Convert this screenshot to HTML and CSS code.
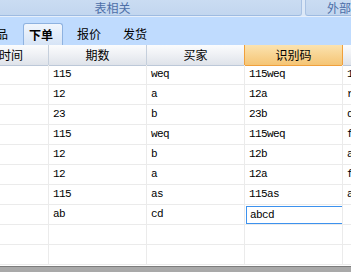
FILE: index.html
```html
<!DOCTYPE html>
<html lang="zh-CN">
<head>
    <meta charset="UTF-8">
    <title>订单表</title>
    <link rel="stylesheet" href="styles.css">
</head>
<body>

    <div class="groups">
        <div class="group group-main">表相关</div>
        <div class="group group-ext">外部</div>
    </div>

    <div class="tabstrip">
        <span class="tab tab-first">商品</span>
        <span class="tab tab-active">下单</span>
        <span class="tab tab-quote">报价</span>
        <span class="tab tab-ship">发货</span>
    </div>

    <div class="grid">
        <div class="hcell">下单时间</div>
        <div class="hcell">期数</div>
        <div class="hcell before-sel">买家</div>
        <div class="hcell sel">识别码</div>
        <div class="hcell"></div>

        <div class="cell"></div><div class="cell">115</div><div class="cell">weq</div><div class="cell">115weq</div><div class="cell">1</div>
        <div class="cell"></div><div class="cell">12</div><div class="cell">a</div><div class="cell">12a</div><div class="cell">r</div>
        <div class="cell"></div><div class="cell">23</div><div class="cell">b</div><div class="cell">23b</div><div class="cell">q</div>
        <div class="cell"></div><div class="cell">115</div><div class="cell">weq</div><div class="cell">115weq</div><div class="cell">f</div>
        <div class="cell"></div><div class="cell">12</div><div class="cell">b</div><div class="cell">12b</div><div class="cell">a</div>
        <div class="cell"></div><div class="cell">12</div><div class="cell">a</div><div class="cell">12a</div><div class="cell">f</div>
        <div class="cell"></div><div class="cell">115</div><div class="cell">as</div><div class="cell">115as</div><div class="cell">a</div>
        <div class="cell"></div><div class="cell">ab</div><div class="cell">cd</div><div class="cell"><input class="edit" type="text" value="abcd"></div><div class="cell"></div>
        <div class="cell"></div><div class="cell"></div><div class="cell"></div><div class="cell"></div><div class="cell"></div>
        <div class="cell"></div><div class="cell"></div><div class="cell"></div><div class="cell"></div><div class="cell"></div>
    </div>

    <div class="statusbar"></div>

</body>
</html>
```

FILE: styles.css
```css
body {
    margin: 0;
    width: 351px;
    height: 272px;
    overflow: hidden;
    background: #ffffff;
    font-family: "Noto Sans CJK SC", "DejaVu Sans", sans-serif;
    font-size: 12px;
    color: #000;
}

/* ribbon group captions */
.groups {
    display: flex;
    height: 16px;
    background: #dce8f7;
}

.group {
    height: 15px;
    line-height: 15px;
    border-bottom: 1px solid #9ebbe1;
    background: linear-gradient(to bottom, #cadcf2, #c2d6ef);
    color: #4d6fa8;
    font-size: 12px;
    white-space: nowrap;
}

.group-main {
    width: 387px;
    margin-left: -76px;
    text-align: center;
    border-right: 1px solid #a9c2e3;
    border-radius: 0 0 3px 0;
}

.group-ext {
    flex: 1;
    margin-left: 3px;
    padding-left: 21px;
    border-left: 1px solid #a9c2e3;
    border-radius: 0 0 0 3px;
}

/* tabs */
.tabstrip {
    display: flex;
    align-items: flex-end;
    height: 28px;
    border-top: 1px solid #e6effb;
    background: #bfdbfe;
    white-space: nowrap;
}

.tab {
    height: 22px;
    line-height: 22px;
}

.tab-first {
    margin-left: -16px;
}

.tab-active {
    margin-left: 15px;
    height: 21px;
    padding: 0 9px 0 5px;
    border: 1px solid #8eb2e0;
    border-bottom: none;
    border-radius: 3px 3px 0 0;
    background: linear-gradient(to bottom, #f1f6fd, #d6e4f6);
    font-weight: bold;
}

.tab-quote {
    margin-left: 14px;
}

.tab-ship {
    margin-left: 22px;
}

/* data grid */
.grid {
    display: grid;
    grid-template-columns: 99px 98px 98px 98px 98px;
    grid-auto-rows: 20px;
    margin-left: -50px;
}

.hcell {
    height: 21px;
    line-height: 20px;
    box-sizing: border-box;
    text-align: center;
    background: linear-gradient(to bottom, #fbfcfd 0%, #eef0f4 50%, #dfe3ea 100%);
    border-right: 1px solid #c5cfdc;
    border-bottom: 1px solid #bcc8d8;
    white-space: nowrap;
}

.hcell.before-sel {
    border-right-color: #f0a03c;
}

.hcell.sel {
    background: linear-gradient(to bottom, #fbe3b0 0%, #f8d28f 55%, #f5c575 100%);
    border-right-color: #f0a03c;
    border-bottom-color: #f0a03c;
}

.cell {
    box-sizing: border-box;
    padding-left: 4px;
    line-height: 19px;
    border-right: 1px solid #ebebeb;
    border-bottom: 1px solid #ebebeb;
    font-family: "Liberation Mono", "DejaVu Sans Mono", monospace;
    font-size: 11px;
    letter-spacing: -0.6px;
    white-space: nowrap;
    overflow: hidden;
}

.edit {
    display: block;
    box-sizing: border-box;
    width: 97px;
    height: 18px;
    margin: 1px 0 0 -3px;
    padding: 0 0 0 3px;
    border: 1px solid #3d92ee;
    outline: none;
    font-family: "Liberation Mono", "DejaVu Sans Mono", monospace;
    font-size: 11px;
    letter-spacing: -0.6px;
    color: #000;
}

.statusbar {
    height: 10px;
    margin-top: 1px;
    border-top: 1px solid #7c7c7c;
    background: #a9a9a9;
}
```
